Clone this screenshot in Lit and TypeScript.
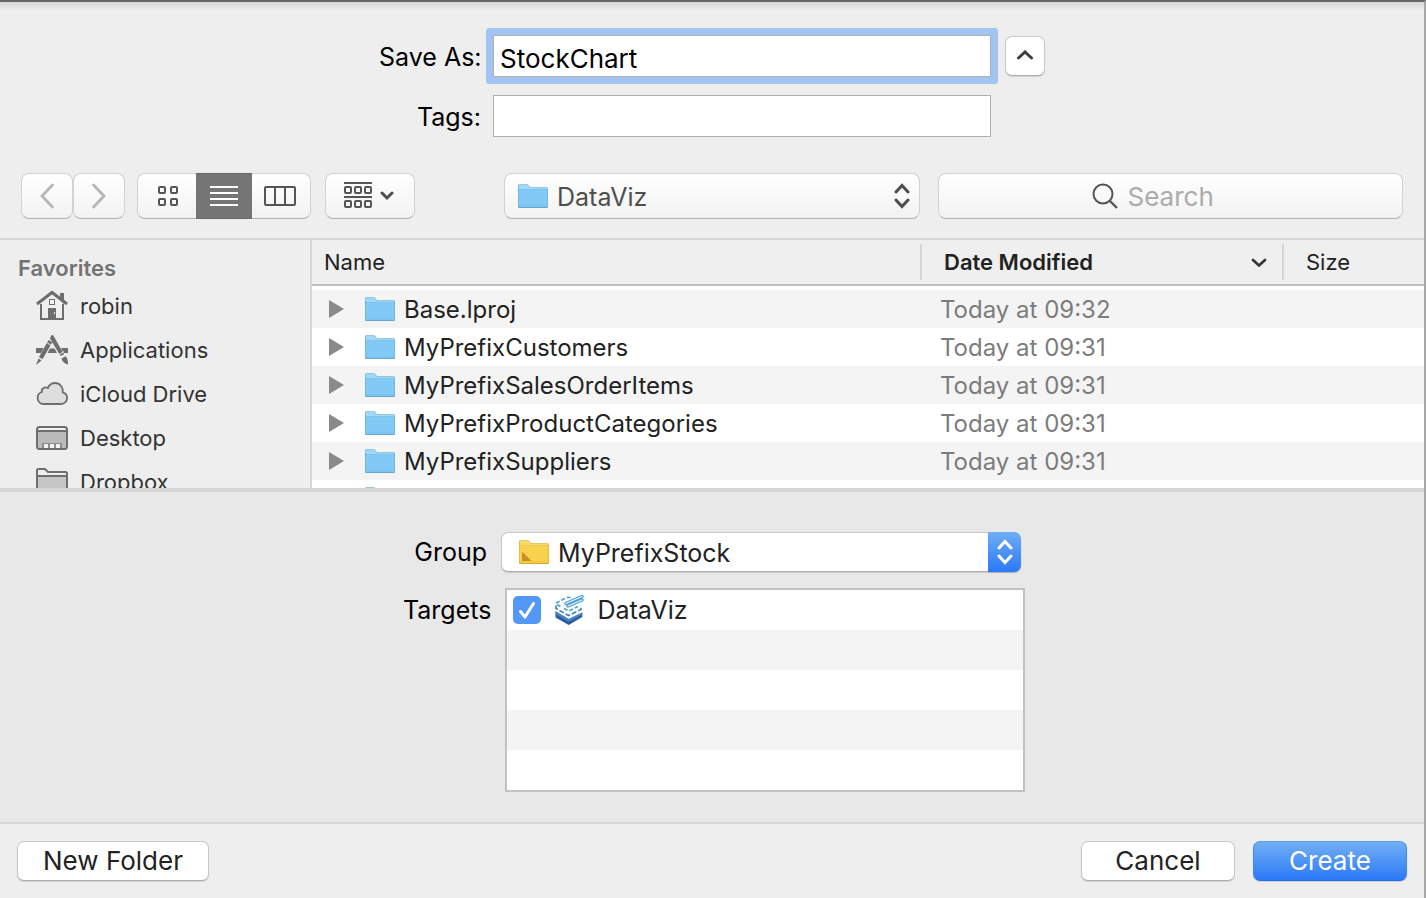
import { LitElement, html, css, svg } from "lit";
import { customElement, state } from "lit/decorators.js";

interface Place {
  name: string;
  icon: unknown;
}

interface Entry {
  name: string;
  modified: string;
}

const houseIcon = html`<svg class="place-icon" viewBox="0 0 32 32" aria-hidden="true">
  <path d="M24 3h4v11l-4-4z" fill="#6e6e6e" />
  <path d="M5 14V29H27V14" fill="none" stroke="#6e6e6e" stroke-width="2" />
  <path d="M1 14 16 2.500 31 14" fill="none" stroke="#6e6e6e" stroke-width="3" />
  <rect x="13.5" y="9.5" width="5" height="5" fill="#f4f4f4" stroke="#6e6e6e" />
  <path d="M12 18h8v11h-8z" fill="#6e6e6e" />
  <path d="M18 22h1v2h-1z" fill="#eee" />
</svg>`;

const appsIcon = html`<svg class="place-icon" viewBox="0 0 32 32" aria-hidden="true">
  <path d="M0 14h7.500l-2.500 5H0zM14 14.500h4.500l2.500 4.500h-9.500zM25 14h7v5h-4.500z" fill="#6e6e6e" />
  <path d="M14.300 3.500 15.500 1.200Q16.500 .6 17.500 1.700L28 20.500 24.500 22 14 4.500z" fill="#6e6e6e" />
  <path d="M12.500 6l3.800 2.200L6.500 25.300 3 23z" fill="#6e6e6e" />
  <path d="M2.500 24.500l3 2L0 31z" fill="#6e6e6e" />
  <path d="M25.500 24.500l4.200-2.300c2 2.300 2.300 5 2.300 8.300-3-.7-5.800-2.500-6.500-6z" fill="#6e6e6e" />
  <path d="M10.500 8.500l5 3M22.500 21l5.500-3.500" stroke="#eee" stroke-width="1" />
</svg>`;

const cloudIcon = html`<svg class="place-icon" viewBox="0 0 32 32" aria-hidden="true">
  <path
    d="M7 26A6.200 6.200 0 0 1 5.800 14C5 10.800 8.500 8.300 11.800 10 13.200 7 16 5 19 5c5 0 8.200 4.200 7.800 9.300 2.700.8 4.300 3 4.300 5.600 0 3.400-2.600 6.100-6 6.100z"
    fill="#dedede" stroke="#6e6e6e" stroke-width="1.800" />
</svg>`;

const desktopIcon = html`<svg class="place-icon" viewBox="0 0 32 32" aria-hidden="true">
  <rect x="1" y="5" width="30" height="22" rx="2.500" fill="#bababa" />
  <path d="M2 6h28v3H2z" fill="#efefef" />
  <path d="M1 9h30" stroke="#6e6e6e" stroke-width="2" />
  <path d="M6 21h20v5H6z" fill="#8c8c8c" />
  <path d="M8 22h4v4H8zM14 22h4v4h-4zM20 22h4v4h-4z" fill="#f4f4f4" />
  <rect x="1" y="5" width="30" height="22" rx="2.500" fill="none" stroke="#6e6e6e" stroke-width="2" />
</svg>`;

const plainFolderIcon = html`<svg class="place-icon" viewBox="0 0 32 32" aria-hidden="true">
  <path d="M1 10h30v18H1z" fill="#c6c6c6" />
  <path d="M1 28V4.500Q1 3 2.500 3H9l3 3H29.500Q31 6 31 7.500V28zM1 10h30" fill="none" stroke="#6e6e6e" stroke-width="2" />
</svg>`;

const folderShape = (tab: string, body: string, edge: string, corner = false) => svg`
  <path d="M0 23V1.500Q0 .5 1 .5H8.500Q9.500 .5 10 1L12 3.500H29Q30 3.500 30 4.500V23z" fill=${tab} />
  <path d="M0 5.500H30V23Q30 24 29 24H1Q0 24 0 23z" fill=${body} />
  <path d="M0 5.500H30M1 22h28" stroke=${edge} stroke-width="1" opacity=".35" />
  <path d="M.5 23.500h29" stroke=${edge} stroke-width="1" />
  <path d="M.5 23V1.500Q.5 .5 1.500 .5H8.500Q9.500 .5 10 1L12 3.500H28.500Q29.500 3.500 29.500 4.500V23" fill="none" stroke=${edge} stroke-width="1" opacity=".55" />
  ${corner ? svg`<path d="M3 11.500 12.500 21H3z" fill="#c98f2b" />` : ""}
`;

const blueFolder = html`<svg class="folder" viewBox="0 0 30 24" aria-hidden="true">
  ${folderShape("#a0d8f8", "#82caf5", "#62a9d2")}
</svg>`;

const yellowFolder = html`<svg class="folder" viewBox="0 0 30 24" aria-hidden="true">
  ${folderShape("#f8dc6b", "#f9d24d", "#d9a932", true)}
</svg>`;

const updownIcon = html`<svg class="updown" viewBox="0 0 16 26" aria-hidden="true">
  <path d="M2 9 8 2.500 14 9M2 17l6 6.500L14 17" />
</svg>`;

const square = (x: number, y: number) =>
  svg`<rect x=${x + 1} y=${y + 1} width="6" height="6" rx="1" />`;

@customElement("app-root")
export class AppRoot extends LitElement {
  @state() private view = "list";

  private readonly places: Place[] = [
    { name: "robin", icon: houseIcon },
    { name: "Applications", icon: appsIcon },
    { name: "iCloud Drive", icon: cloudIcon },
    { name: "Desktop", icon: desktopIcon },
    { name: "Dropbox", icon: plainFolderIcon },
  ];

  private readonly entries: Entry[] = [
    { name: "Base.lproj", modified: "Today at 09:32" },
    { name: "MyPrefixCustomers", modified: "Today at 09:31" },
    { name: "MyPrefixSalesOrderItems", modified: "Today at 09:31" },
    { name: "MyPrefixProductCategories", modified: "Today at 09:31" },
    { name: "MyPrefixSuppliers", modified: "Today at 09:31" },
    { name: "", modified: "" },
  ];

  static styles = css`
    :host {
      display: block;
      font-family: Inter, "Liberation Sans", sans-serif;
      font-size: 25px;
      line-height: 30px;
      color: #000;
    }
    *,
    *::before {
      box-sizing: border-box;
    }
    button,
    input,
    select {
      font: inherit;
      color: inherit;
      margin: 0;
      padding: 0;
      appearance: none;
      outline: none;
    }
    svg {
      display: block;
      flex: none;
    }
    .sheet {
      display: flex;
      flex-direction: column;
      min-height: 100vh;
      background: #eee;
      border-top: 2px solid #686866;
      border-right: 2px solid #a6a6a6;
    }
    .head {
      padding: 33px 21px 19px;
      background: linear-gradient(#d6d6d6, #eee 8px);
      border-bottom: 2px solid #d6d6d6;
    }
    .naming {
      display: grid;
      grid-template-columns: 102px minmax(0, 498px) 42px;
      column-gap: 12px;
      row-gap: 18px;
      justify-content: center;
      align-items: center;
      margin-bottom: 36px;
    }
    .naming label {
      padding-top: 2px;
      text-align: right;
      white-space: nowrap;
    }
    .field {
      width: 100%;
      height: 42px;
      padding: 4px 6px 0;
      border: 1px solid #b0b0b0;
      background: #fff;
      font-size: 26px;
    }
    .field.focused {
      box-shadow: 0 0 0 7px #a2c4f1;
      border-radius: 1px;
    }
    .push {
      display: flex;
      align-items: center;
      justify-content: center;
      height: 40px;
      background: #fff;
      border: 1px solid #c8c8c8;
      border-bottom-color: #adadad;
      border-radius: 7px;
      box-shadow: 0 1px 1px rgba(0, 0, 0, 0.12);
      color: #222;
    }
    .collapse {
      width: 40px;
      justify-self: end;
    }
    .toolbar {
      display: flex;
      align-items: center;
    }
    .tool {
      display: flex;
      align-items: center;
      justify-content: center;
      height: 46px;
      border: 1px solid #d2d2d2;
      border-bottom-color: #b0b0b0;
      border-radius: 8px;
      background: linear-gradient(#fff, #f2f2f2);
    }
    .history {
      display: flex;
    }
    .history .tool {
      width: 52px;
    }
    .views {
      display: flex;
      margin: 0 14px 0 12px;
    }
    .views .tool {
      width: 59px;
      padding-left: 2px;
      border-radius: 8px 0 0 8px;
      border-right: 0;
    }
    .views .tool:nth-child(2) {
      width: 56px;
      padding: 0;
      border-radius: 0;
      border-left: 0;
    }
    .views .tool:last-child {
      padding: 0 2px 0 0;
      border-radius: 0 8px 8px 0;
      border-left: 0;
      border-right: 1px solid #d2d2d2;
    }
    .views .tool[aria-pressed="true"] {
      background: #757575;
      border-color: #696969;
    }
    .glyph {
      fill: none;
      stroke: #555;
      stroke-width: 2;
    }
    .views [aria-pressed="true"] .glyph {
      stroke: #fff;
    }
    .arrange {
      width: 90px;
      padding-right: 2px;
      gap: 8px;
    }
    .where {
      flex: 0 1 416px;
      margin: 0 18px 0 auto;
    }
    .picker {
      display: grid;
      align-items: center;
    }
    .picker > * {
      grid-area: 1 / 1;
    }
    .picker svg {
      pointer-events: none;
    }
    .picker select {
      width: 100%;
      display: block;
    }
    .where select {
      padding: 2px 0 0 52px;
      color: #4e4e4e;
    }
    .folder {
      width: 30px;
      height: 24px;
    }
    .where .folder {
      margin-left: 14px;
    }
    .updown {
      width: 16px;
      height: 26px;
      fill: none;
      stroke: #4e4e4e;
      stroke-width: 3;
      stroke-linecap: round;
      justify-self: end;
    }
    .where .updown {
      margin-right: 10px;
    }
    .search {
      flex: 0 1 465px;
      gap: 10px;
      padding: 0 36px 0 0;
    }
    .search input {
      width: 86px;
      border: 0;
      background: none;
      font-size: 26px;
      field-sizing: content;
    }
    .search input::placeholder {
      color: #ababab;
      opacity: 1;
    }
    .browser {
      display: grid;
      grid-template-columns: 312px minmax(0, 1fr);
      height: 252px;
      overflow: hidden;
      border-bottom: 4px solid #d6d6d6;
    }
    .sidebar {
      border-right: 2px solid #d6d6d6;
      padding-top: 13px;
      overflow: hidden;
      font-size: 22px;
    }
    .sidebar h2 {
      margin: 0;
      padding-left: 18px;
      font-size: 22px;
      font-weight: 600;
      color: #737373;
    }
    .sidebar ul {
      margin: 0;
      padding: 1px 0 0;
      list-style: none;
    }
    .place {
      display: flex;
      align-items: center;
      gap: 12px;
      height: 44px;
      padding-left: 36px;
      color: #333;
      text-decoration: none;
    }
    .place-icon {
      width: 32px;
      height: 32px;
    }
    .files {
      overflow: hidden;
      background: #fff;
    }
    table {
      width: 100%;
      table-layout: fixed;
      border-collapse: separate;
      border-spacing: 0;
    }
    .col-date {
      width: 362px;
    }
    .col-size {
      width: 142px;
    }
    th {
      height: 46px;
      padding: 0;
      font-size: 22px;
      font-weight: 400;
      text-align: left;
      color: #222;
      background: #efefef;
      border-bottom: 2px solid #c0c0c0;
    }
    .th {
      display: flex;
      align-items: center;
      justify-content: space-between;
      height: 36px;
      padding: 0 14px 0 12px;
    }
    .th.split {
      border-left: 2px solid #d6d6d6;
      padding-left: 22px;
    }
    th[aria-sort] {
      font-weight: 600;
    }
    tbody::before {
      content: "";
      display: table-row;
      height: 4px;
    }
    td {
      height: 38px;
      padding: 0;
      font-size: 24px;
      color: #7c7c7c;
      white-space: nowrap;
    }
    tbody tr:nth-child(odd) {
      background: #f4f4f4;
    }
    .date {
      padding: 2px 0 0 20px;
    }
    .entry {
      display: flex;
      align-items: center;
      padding-left: 17px;
      color: #222;
    }
    .entry .folder {
      margin: 0 9px 0 21px;
    }
    .name {
      padding-top: 2px;
    }
    .twist {
      width: 15px;
      height: 18px;
      border: 0;
      background: none;
    }
    .options {
      flex: 1;
      display: flex;
      flex-direction: column;
      align-items: center;
      gap: 16px;
      padding: 40px 0 30px 4px;
      background: #e8e8e8;
      border-bottom: 2px solid #d6d6d6;
    }
    .option {
      display: flex;
      justify-content: flex-end;
      gap: 14px;
      width: 622px;
      max-width: 100%;
      line-height: 40px;
    }
    .option.group {
      padding-right: 4px;
    }
    .option > :last-child {
      flex: 0 1 520px;
    }
    .caption {
      padding-top: 2px;
    }
    .group select {
      padding-left: 56px;
    }
    .group .folder {
      margin-left: 18px;
    }
    .cap {
      display: flex;
      align-items: center;
      justify-content: center;
      justify-self: end;
      width: 33px;
      height: 40px;
      border-radius: 0 7px 7px 0;
      background: linear-gradient(#6fadf5, #2b79f7);
      box-shadow: 0 1px 1px rgba(0, 0, 0, 0.15);
      pointer-events: none;
    }
    .cap .updown {
      stroke: #fff;
    }
    .targets {
      margin: 0;
      padding: 0;
      list-style: none;
      background: #fff;
      border: 2px solid #c2c2c2;
    }
    .targets li {
      height: 40px;
      padding-left: 6px;
    }
    .targets li:nth-child(even) {
      background: #f4f4f4;
    }
    .target {
      display: flex;
      align-items: center;
      color: #222;
    }
    .tick {
      display: grid;
      margin-right: 13px;
    }
    .tick > * {
      grid-area: 1 / 1;
      width: 28px;
      height: 28px;
    }
    .tick input {
      border-radius: 5px;
      background: #fff;
      border: 1px solid #b0b0b0;
    }
    .tick input:checked {
      border: 0;
      background: #5398f7;
    }
    .tick svg {
      pointer-events: none;
    }
    .app-icon {
      width: 30px;
      height: 32px;
      margin-right: 13px;
    }
    .footer {
      display: flex;
      gap: 18px;
      padding: 17px;
    }
    .footer .push {
      width: 154px;
      font-size: 26px;
    }
    .footer .new {
      width: 192px;
      margin-right: auto;
    }
    .footer .primary {
      color: #fff;
      border-color: #5a9cf0 #3f87f2 #2a6be8;
      background: linear-gradient(#72aff5, #2b79f7);
    }
  `;

  private viewButton(id: string, label: string, width: number, drawing: unknown) {
    return html`<button
      class="tool"
      aria-label=${label}
      aria-pressed=${this.view === id ? "true" : "false"}
      @click=${() => (this.view = id)}
    >
      <svg class="glyph" width=${width} height="20" viewBox="0 0 ${width} 20" aria-hidden="true">${drawing}</svg>
    </button>`;
  }

  private toolbarTemplate() {
    return html`<div class="toolbar">
      <div class="history">
        <button class="tool" aria-label="Back">
          <svg width="16" height="26" viewBox="0 0 16 26" fill="none" stroke="#b6b6b6" stroke-width="2.800" stroke-linecap="round"><path d="M13.500 2 3 13 13.500 24" /></svg>
        </button>
        <button class="tool" aria-label="Forward">
          <svg width="16" height="26" viewBox="0 0 16 26" fill="none" stroke="#b6b6b6" stroke-width="2.800" stroke-linecap="round"><path d="M2.500 2 13 13 2.500 24" /></svg>
        </button>
      </div>
      <div class="views" role="group" aria-label="View">
        ${this.viewButton("icons", "Icons", 20, svg`${square(0, 0)}${square(12, 0)}${square(0, 12)}${square(12, 12)}`)}
        ${this.viewButton("list", "List", 28, svg`<path d="M0 1h28M0 7h28M0 13h28M0 19h28" />`)}
        ${this.viewButton("columns", "Columns", 32, svg`<rect x="1" y="1" width="30" height="18" rx="1" /><path d="M11 1v18M21 1v18" />`)}
      </div>
      <button class="tool arrange" aria-label="Arrange items">
        <svg class="glyph" width="28" height="30" viewBox="0 0 28 30" aria-hidden="true">
          <path d="M0 2h28M0 16h28" />
          ${[0, 10, 20].map((x) => svg`${square(x, 5)}${square(x, 19)}`)}
        </svg>
        <svg width="14" height="10" viewBox="0 0 14 10" fill="none" stroke="#4e4e4e" stroke-width="3" stroke-linecap="round"><path d="M2 2l5 5 5-5" /></svg>
      </button>
      <div class="where picker">
        <select class="tool" aria-label="Location"><option>DataViz</option></select>
        ${blueFolder}${updownIcon}
      </div>
      <label class="search tool">
        <svg width="26" height="26" viewBox="0 0 26 26" fill="none" stroke="#555" stroke-width="2" aria-hidden="true"><circle cx="11" cy="11" r="9.500" /><path d="M17.500 17.500 25 25" stroke-width="2.400" /></svg>
        <input type="text" placeholder="Search" aria-label="Search" />
      </label>
    </div>`;
  }

  private filesTemplate() {
    return html`<div class="files">
      <table>
        <colgroup><col /><col class="col-date" /><col class="col-size" /></colgroup>
        <thead>
          <tr>
            <th scope="col"><div class="th">Name</div></th>
            <th scope="col" aria-sort="descending">
              <div class="th split">
                Date Modified
                <svg width="18" height="10" viewBox="0 0 18 10" fill="none" stroke="#333" stroke-width="2.600" stroke-linecap="round"><path d="M3 3l6 5.500L15 3" /></svg>
              </div>
            </th>
            <th scope="col"><div class="th split">Size</div></th>
          </tr>
        </thead>
        <tbody>
          ${this.entries.map(
            (entry) => html`<tr>
              <td>
                <div class="entry">
                  <button class="twist" aria-label="Expand ${entry.name}">
                    <svg width="15" height="18" viewBox="0 0 15 18"><path d="M0 0 15 9 0 18z" fill="#8a8a8a" /></svg>
                  </button>
                  ${blueFolder}<span class="name">${entry.name}</span>
                </div>
              </td>
              <td class="date">${entry.modified}</td>
              <td></td>
            </tr>`
          )}
        </tbody>
      </table>
    </div>`;
  }

  private optionsTemplate() {
    return html`<section class="options">
      <div class="option group">
        <label for="group">Group</label>
        <div class="picker">
          <select id="group" class="push"><option>MyPrefixStock</option></select>
          ${yellowFolder}
          <span class="cap">${updownIcon}</span>
        </div>
      </div>
      <div class="option">
        <span id="targets" class="caption">Targets</span>
        <ul class="targets" aria-labelledby="targets">
          <li>
            <label class="target">
              <span class="tick">
                <input type="checkbox" checked />
                <svg viewBox="0 0 28 28" fill="none" stroke="#fff" stroke-width="3" stroke-linecap="round" stroke-linejoin="round"><path d="M7.500 15.500 12 21 20.500 7.500" /></svg>
              </span>
              <svg class="app-icon" viewBox="0 0 30 32" aria-hidden="true">
                <path d="M1.500 17.300 14.700 25 28.300 18.500V23L14.700 31 1.500 23.500z" fill="#2b5da6" />
                <path d="M1.500 17.300 14.700 25 28.300 18.500V20.500L14.700 27.500 1.500 20z" fill="#4a86c6" />
                <path d="M2 12.500 14 7.500 27 12.500 26 16 14.500 21.500 2 15z" fill="#fff" />
                <path d="M2 11.500V14.500L14.500 21.500 27 15.500V11.500" fill="none" stroke="#3a80bf" stroke-width="1.600" stroke-dasharray="5 2" />
                <path d="M2 9 13 3.500H17M3 10.500 8 13.500M10 14.500 15 17 24 12.500" fill="none" stroke="#49a2d4" stroke-width="1.600" stroke-dasharray="4 2" />
                <path d="M12 9.500 28 2.500M14 12 28 6" stroke="#4c9fd6" stroke-width="3.400" stroke-linecap="round" />
                <path d="M12 9.500 28 2.500M14 12 28 6" stroke="#eef8fe" stroke-width="1.200" stroke-linecap="round" />
              </svg>
              DataViz
            </label>
          </li>
          <li></li>
          <li></li>
          <li></li>
          <li></li>
        </ul>
      </div>
    </section>`;
  }

  render() {
    return html`<main class="sheet">
      <header class="head">
        <div class="naming">
          <label for="name">Save As:</label>
          <input id="name" class="field focused" type="text" value="StockChart" />
          <button class="push collapse" aria-label="Collapse">
            <svg width="18" height="12" viewBox="0 0 18 12" fill="none" stroke="#3c3c3c" stroke-width="3" stroke-linecap="round"><path d="M2.500 8 9 2l6.500 6" /></svg>
          </button>
          <label for="tags">Tags:</label>
          <input id="tags" class="field" type="text" />
        </div>
        ${this.toolbarTemplate()}
      </header>
      <div class="browser">
        <nav class="sidebar">
          <h2>Favorites</h2>
          <ul>
            ${this.places.map(
              (place) => html`<li><a class="place" href="#">${place.icon}${place.name}</a></li>`
            )}
          </ul>
        </nav>
        ${this.filesTemplate()}
      </div>
      ${this.optionsTemplate()}
      <footer class="footer">
        <button class="push new">New Folder</button>
        <button class="push">Cancel</button>
        <button class="push primary">Create</button>
      </footer>
    </main>`;
  }
}
